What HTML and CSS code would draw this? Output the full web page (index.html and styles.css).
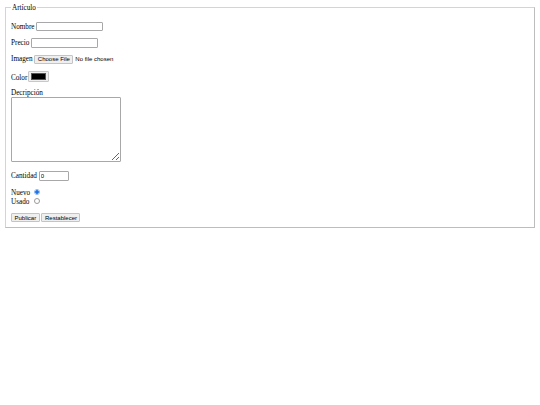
FILE: index.html
```html
<!DOCTYPE html>
<html lang="es">
<head>
<meta charset="utf-8">
<title>Artículo</title>
<link rel="stylesheet" href="styles.css">
</head>
<body class="page">
<form class="form">
<fieldset class="box">
<legend class="legend">Artículo</legend>
<p class="row">Nombre <input class="ctl text" type="text"></p>
<p class="row">Precio <input class="ctl text" type="text"></p>
<p class="row">Imagen <input class="ctl file" type="file"></p>
<p class="row">Color <input class="ctl color" type="color"></p>
<p class="row">Decripción<br><textarea class="ctl area"></textarea></p>
<p class="row">Cantidad <input class="ctl num" type="number" value="0"></p>
<p class="row">Nuevo <input class="radio" type="radio" name="estado" checked><br>Usado <input class="radio" type="radio" name="estado"></p>
<input class="ctl btn" type="submit" value="Publicar"> <input class="ctl btn" type="reset" value="Restablecer">
</fieldset>
</form>
</body>
</html>
```
FILE: styles.css
```css
.page {
  margin: 3.6px;
  font-family: "Liberation Serif", "Times New Roman", serif;
  font-size: 7.2px;
  color: #000;
}
.form {
  margin: 0;
}
.box {
  margin: 0 1px;
  border: 1px solid #bdbdbd;
  border-top-color: #d4d4d4;
  border-left-color: #d4d4d4;
  padding: 3px 5.4px 5px;
}
.legend {
  padding: 0 1px;
}
.row {
  margin: 7.2px 0;
}
.ctl {
  font-family: "Liberation Sans", Arial, sans-serif;
  font-size: 6px;
}
.text {
  box-sizing: border-box;
  width: 67px;
  height: 9.5px;
  padding: 0 1px;
  border: 1px solid #a8a8a8;
  border-radius: 1px;
}
.num {
  box-sizing: border-box;
  width: 30px;
  height: 9.5px;
  padding: 0 1px;
  border: 1px solid #a8a8a8;
  border-radius: 1px;
}
.file::file-selector-button {
  font: inherit;
  height: 8.5px;
  padding: 0 2.5px;
  margin: 0 2px 0 0;
  border: 1px solid #c4c4c4;
  border-radius: 1px;
  background: #efefef;
  color: #000;
}
.color {
  box-sizing: border-box;
  width: 21px;
  height: 11.5px;
  padding: 1.5px 2px;
  margin: 0 0 -0.5px -1px;
  border: 1px solid #c8c8c8;
  border-radius: 1px;
  background: #efefef;
  vertical-align: text-bottom;
}
.color::-webkit-color-swatch-wrapper {
  padding: 0;
}
.color::-webkit-color-swatch {
  border: 0.5px solid #555;
  border-radius: 0;
}
.area {
  box-sizing: border-box;
  width: 110px;
  height: 65px;
  margin: 0;
  border: 1px solid #a8a8a8;
  border-radius: 1px;
}
.radio {
  appearance: none;
  box-sizing: border-box;
  width: 6px;
  height: 6px;
  margin: 1.5px 1.5px 0 2.5px;
  border: 0.6px solid #9a9a9a;
  border-radius: 50%;
  background: #fff;
  vertical-align: -0.5px;
}
.radio:checked {
  border-color: #8ab4f0;
  background: radial-gradient(circle, #1a73e8 0 55%, #ffffff 65%);
}
.btn {
  height: 9px;
  padding: 0 2.5px;
  margin: 0;
  border: 1px solid #c4c4c4;
  border-radius: 1px;
  background: #efefef;
  color: #000;
}
```
